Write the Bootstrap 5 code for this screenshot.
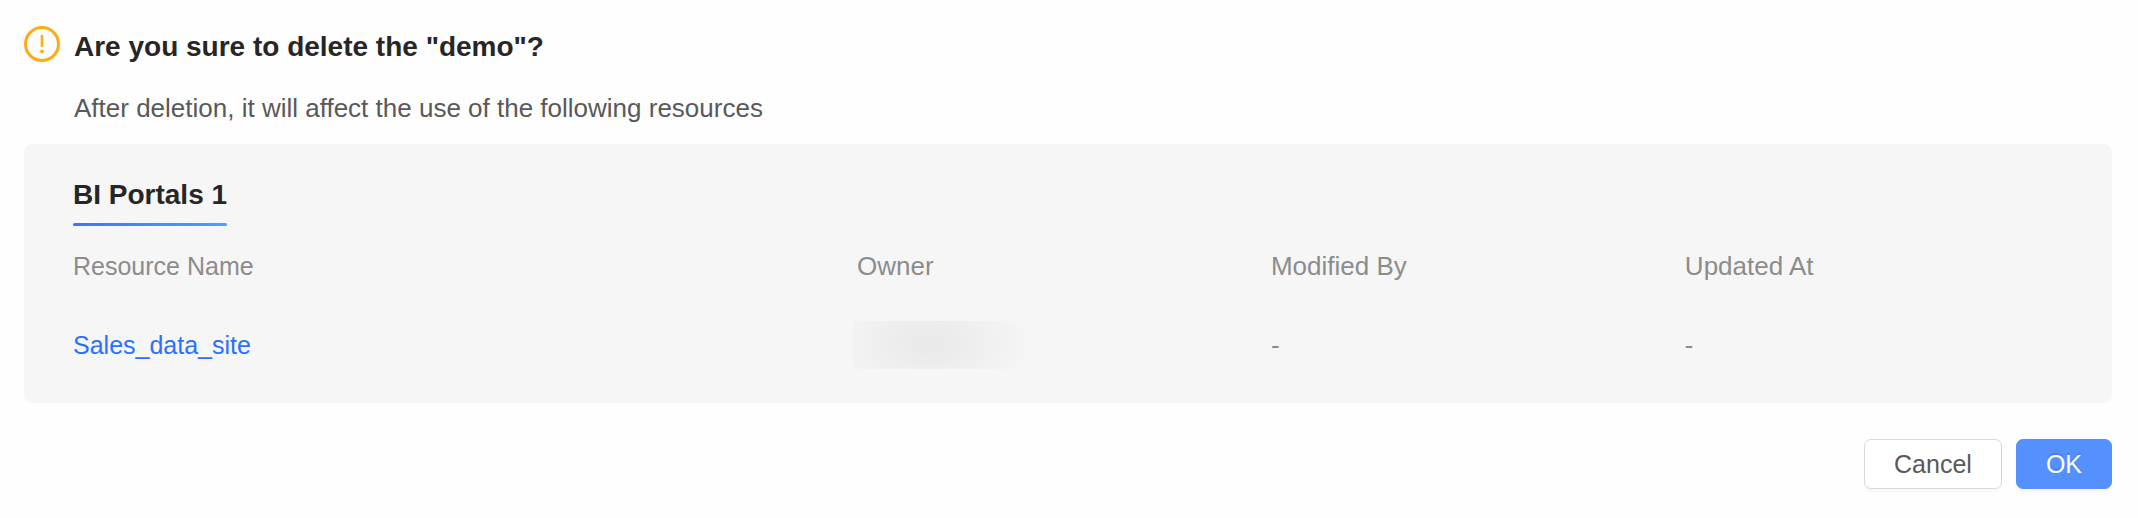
<!DOCTYPE html>
<html lang="en">
<head>
<meta charset="utf-8">
<meta name="viewport" content="width=device-width, initial-scale=1">
<title>Delete resource</title>
<link href="https://cdn.jsdelivr.net/npm/bootstrap@5.3.0/dist/css/bootstrap.min.css" rel="stylesheet">
<style>
  body { font-family: "Liberation Sans", Arial, sans-serif; font-size: 26px; line-height: 36px; color: #595959; background: #fefefe; }
  .confirm { padding: 26px 26px 28px 24px; }
  .warn-icon { width: 36px; height: 36px; }
  .heading-text { font-size: 28px; line-height: 42px; font-weight: 700; color: #262626; }
  .confirm-head { gap: 14px; }
  .note { margin-top: 22px; margin-bottom: 18px; }
  .resources { background: #f6f6f6; border-radius: 8px; padding: 30px 49px 19px; }
  .tab-link { display: block; padding: 0; border: 0; background: none; }
  .tab-link::after { content: ""; display: block; height: 3px; margin-top: 7px; border-radius: 2px; background: linear-gradient(90deg, #4371ff, #4ba0ff); }
  .resource-table { table-layout: fixed; color: #8c8c8c; }
  .resource-table th { font-weight: 400; width: 20.8%; padding: 0; height: 80px; }
  .resource-table th:first-child { width: 39.4%; }
  .resource-table th:last-child { width: auto; }
  .resource-table td { padding: 0; height: 78px; }
  .resource-table tr > :first-child { font-size: 25px; }
  .resource-table a { color: #2b71ff; text-decoration: none; }
  .redacted { width: 180px; height: 48px; margin-left: -4px; background: radial-gradient(ellipse 110px 64px at 76px 22px, #eaeaea 0%, #ebebeb 20%, #f5f5f5 90%, #f6f6f6 100%); }
  .actions { gap: 14px; margin-top: 36px; }
  .action { height: 50px; font-size: 25px; line-height: 36px; padding: 6px 29px; border-radius: 7px; box-shadow: 0 4px 0 rgba(0,0,0,.02); }
  .action-cancel { color: #595959; background: #fff; border-color: #d9d9d9; }
  .action-ok { color: #fff; background: #5590ff; border-color: #5590ff; text-shadow: 0 -2px 0 rgba(0,0,0,.12); }
</style>
</head>
<body>
<main class="confirm" role="alertdialog" aria-labelledby="confirm-title" aria-describedby="confirm-note">
  <div class="confirm-head d-flex align-items-start">
    <svg class="warn-icon flex-shrink-0" viewBox="0 0 36 36" fill="none" stroke="#ffac14" aria-hidden="true">
      <circle cx="18" cy="18" r="16.5" stroke-width="3"/>
      <path d="M18 9v12" stroke-width="2.6"/>
      <circle cx="18" cy="25.3" r="1.9" fill="#ffac14" stroke="none"/>
    </svg>
    <div>
      <h1 class="heading-text mb-0" id="confirm-title">Are you sure to delete the "demo"?</h1>
      <p class="note" id="confirm-note">After deletion, it will affect the use of the following resources</p>
    </div>
  </div>
  <section class="resources">
    <button type="button" class="tab-link heading-text" aria-pressed="true">BI Portals 1</button>
    <table class="resource-table w-100 align-middle">
      <thead>
        <tr><th scope="col">Resource Name</th><th scope="col">Owner</th><th scope="col">Modified By</th><th scope="col">Updated At</th></tr>
      </thead>
      <tbody>
        <tr><td><a href="#">Sales_data_site</a></td><td><div class="redacted"></div></td><td>-</td><td>-</td></tr>
      </tbody>
    </table>
  </section>
  <div class="actions d-flex justify-content-end">
    <button type="button" class="btn action action-cancel">Cancel</button>
    <button type="button" class="btn action action-ok">OK</button>
  </div>
</main>
<script src="https://cdn.jsdelivr.net/npm/bootstrap@5.3.0/dist/js/bootstrap.bundle.min.js"></script>
</body>
</html>
